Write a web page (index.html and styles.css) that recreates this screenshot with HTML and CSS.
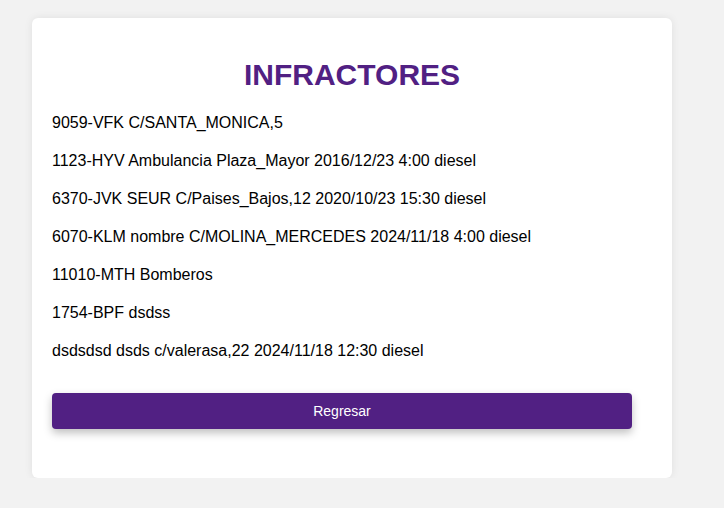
FILE: index.html
```html
<!DOCTYPE html>
<html lang="es">
<head>
<meta charset="utf-8">
<title>Infractores</title>
<link rel="stylesheet" href="styles.css">
</head>
<body>
<div class="card">
  <h1 class="title">INFRACTORES</h1>
  <p class="item">9059-VFK C/SANTA_MONICA,5</p>
  <p class="item">1123-HYV Ambulancia Plaza_Mayor 2016/12/23 4:00 diesel</p>
  <p class="item">6370-JVK SEUR C/Paises_Bajos,12 2020/10/23 15:30 diesel</p>
  <p class="item">6070-KLM nombre C/MOLINA_MERCEDES 2024/11/18 4:00 diesel</p>
  <p class="item">11010-MTH Bomberos</p>
  <p class="item">1754-BPF dsdss</p>
  <p class="item">dsdsdsd dsds c/valerasa,22 2024/11/18 12:30 diesel</p>
  <button class="btn" type="button">Regresar</button>
</div>
</body>
</html>
```

FILE: styles.css
```css
html, body {
  margin: 0;
  padding: 0;
}
body {
  background: #f2f2f2;
  font-family: "Liberation Sans", Arial, sans-serif;
  color: #000;
}
.card {
  width: 600px;
  margin: 18px 0 0 32px;
  padding: 20px 20px 49px;
  background: #fff;
  border-radius: 6px;
  box-shadow: 0 0 8px rgba(0, 0, 0, 0.08);
}
.title {
  margin: 20px 0 22px;
  font-size: 30px;
  font-weight: bold;
  text-align: center;
  color: #512083;
}
.item {
  margin: 20px 0;
  font-size: 16px;
  line-height: 18px;
}
.btn {
  display: block;
  width: 580px;
  height: 36px;
  margin-top: 33px;
  border: none;
  border-radius: 4px;
  background: #512083;
  color: #fff;
  font-family: "Liberation Sans", Arial, sans-serif;
  font-size: 14px;
  box-shadow: 0 4px 8px rgba(0, 0, 0, 0.25);
  cursor: pointer;
}
```
